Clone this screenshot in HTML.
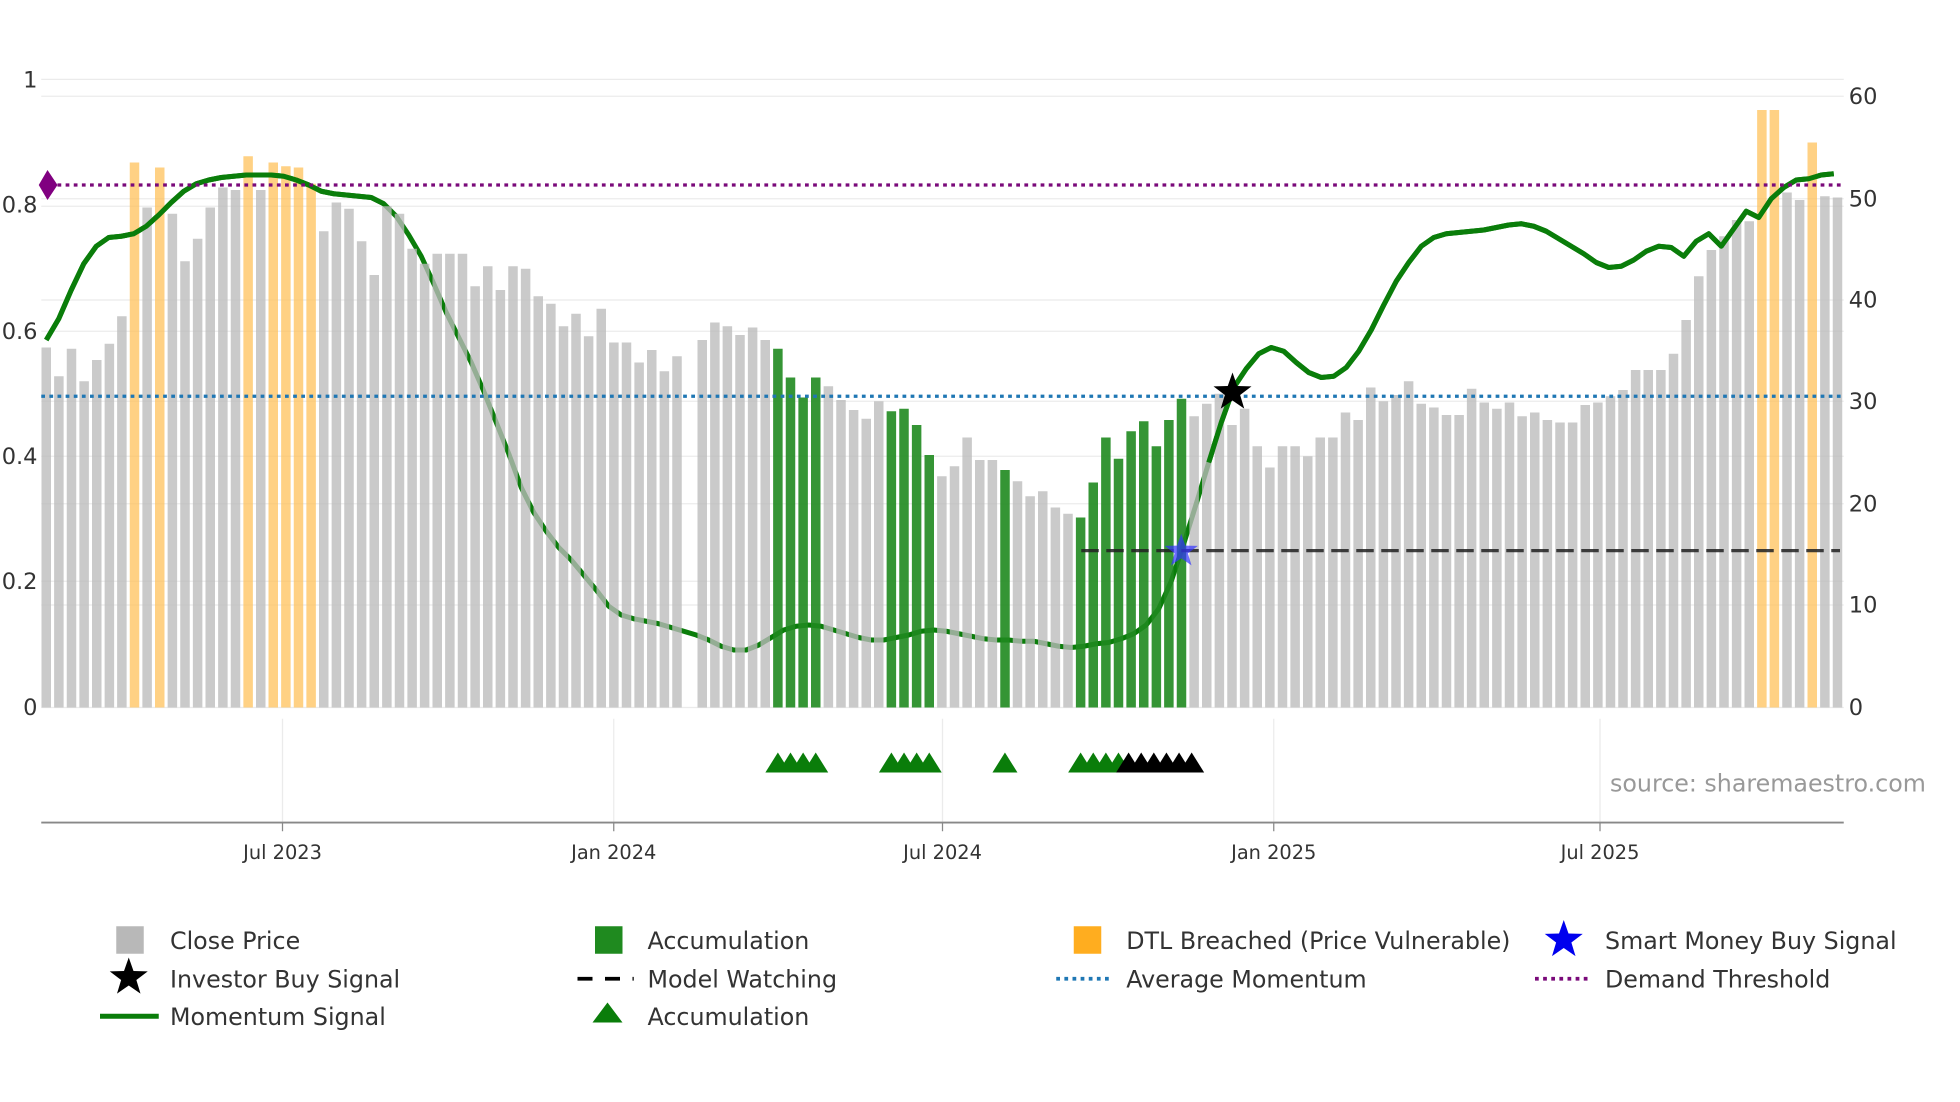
<!DOCTYPE html>
<html><head><meta charset="utf-8"><style>
html,body{margin:0;padding:0;background:#fff;}
svg{display:block;font-family:"DejaVu Sans","Liberation Sans",sans-serif;}
</style></head><body>
<svg id="s" width="1960" height="1102" viewBox="0 0 1568 881.6" preserveAspectRatio="none" xmlns="http://www.w3.org/2000/svg">
<rect width="1600" height="900" fill="#fff"/>
<g id="grid" stroke="#ebebeb" stroke-width="1"></g>
<g id="line1"></g>
<g id="bars"></g>
<g id="line2"></g>
<line x1="33" y1="148" x2="1475" y2="148" stroke="#7a0a7a" stroke-width="2.6" stroke-dasharray="3,3.5"/>
<line x1="33" y1="317" x2="1475" y2="317" stroke="#1f77b4" stroke-width="2.6" stroke-dasharray="3,3.5"/>
<line x1="865" y1="440.5" x2="1472" y2="440.5" stroke="#222" stroke-width="2.6" stroke-dasharray="14,6" opacity="0.85"/>
<polygon points="38,136 46,148 38,160 31,148" fill="#800080"/>
<g id="tri"></g>
<path id="bstar" fill="#3333ff" opacity="0.7"/>
<path id="kstar" fill="#000"/>
<line x1="33" y1="658" x2="1475" y2="658" stroke="#888" stroke-width="1.5"/>
<g id="xt" font-size="15.5" fill="#333" text-anchor="middle"></g>
<g font-size="18" fill="#333" text-anchor="end">
<text x="30" y="70">1</text><text x="30" y="170">0.8</text><text x="30" y="271">0.6</text><text x="30" y="371">0.4</text><text x="30" y="471">0.2</text><text x="30" y="572">0</text>
</g>
<g font-size="18" fill="#333">
<text x="1479" y="83">60</text><text x="1479" y="165">50</text><text x="1479" y="246">40</text><text x="1479" y="327">30</text><text x="1479" y="409">20</text><text x="1479" y="490">10</text><text x="1479" y="572">0</text>
</g>
<text x="1288" y="633" font-size="19" fill="#999">source: sharemaestro.com</text>
<g font-size="19" fill="#333">
<rect x="93" y="741" width="22" height="22" fill="#b8b8b8"/><text x="136" y="759">Close Price</text>
<rect x="476" y="741" width="22" height="22" fill="#1f8a1f"/><text x="518" y="759">Accumulation</text>
<rect x="859" y="741" width="22" height="22" fill="#ffad1f"/><text x="901" y="759">DTL Breached (Price Vulnerable)</text>
<path id="lb" fill="#0000ee"/><text x="1284" y="759">Smart Money Buy Signal</text>
<path id="lk" fill="#000"/><text x="136" y="790">Investor Buy Signal</text>
<line x1="462" y1="783" x2="507" y2="783" stroke="#000" stroke-width="3" stroke-dasharray="12,10"/><text x="518" y="790">Model Watching</text>
<line x1="845" y1="783" x2="890" y2="783" stroke="#1f77b4" stroke-width="3" stroke-dasharray="3,3.5"/><text x="901" y="790">Average Momentum</text>
<line x1="1228" y1="783" x2="1273" y2="783" stroke="#7a0a7a" stroke-width="3" stroke-dasharray="3,3.5"/><text x="1284" y="790">Demand Threshold</text>
<line x1="80" y1="813" x2="127" y2="813" stroke="#0a7d0a" stroke-width="4"/><text x="136" y="820">Momentum Signal</text>
<polygon points="486,802 498,818 474,818" fill="#0a7d0a"/><text x="518" y="820">Accumulation</text>
</g>
</svg>
<script>
var NS="http://www.w3.org/2000/svg";
function el(t,a,p){var e=document.createElementNS(NS,t);for(var k in a)e.setAttribute(k,a[k]);document.getElementById(p).appendChild(e);return e;}
function star(cx,cy,R){var r=R*0.4,d="";for(var i=0;i<10;i++){var a=-Math.PI/2+i*Math.PI/5,rr=i%2?r:R;d+=(i?"L":"M")+(cx+rr*Math.cos(a)).toFixed(1)+","+(cy+rr*Math.sin(a)).toFixed(1);}return d+"Z";}
[77,159,240,321,403,484,165,265,365,465,566,63.5].forEach(function(y){el("line",{x1:33,x2:1475,y1:y,y2:y},"grid");});
[226,491,754,1019,1280].forEach(function(x){el("line",{x1:x,x2:x,y1:575,y2:658},"grid");});
var xl=["Jul 2023","Jan 2024","Jul 2024","Jan 2025","Jul 2025"];
[226,491,754,1019,1280].forEach(function(x,i){el("line",{x1:x,x2:x,y1:658,y2:665,stroke:"#888","stroke-width":1},"xt");var t=el("text",{x:x,y:687},"xt");t.textContent=xl[i];});
var tops=[278,301,279,305,288,275,253,130,166,134,171,209,191,166,150,152,125,152,130,133,134,147,185,162,167,193,220,165,171,199,211,203,203,203,229,213,232,213,215,237,243,261,251,269,247,274,274,290,280,297,285,0,272,258,261,268,262,272,279,302,318,302,309,320,328,335,321,329,327,340,364,381,373,350,368,368,376,385,397,393,406,411,414,386,350,367,345,337,357,336,319,333,323,315,340,327,357,374,357,357,365,350,350,330,336,310,321,316,305,323,326,332,332,311,322,327,322,333,330,336,338,338,324,322,317,312,296,296,296,283,256,221,200,189,176,177,88,88,154,160,114,157,158];
var orange={7:1,9:1,16:1,18:1,19:1,20:1,21:1,136:1,137:1,140:1};
var green={};[58,59,60,61,67,68,69,70,76,82,83,84,85,86,87,88,89,90].forEach(function(i){green[i]=1;});
var N=tops.length,step=(1470-37)/(N-1);
for(var i=0;i<N;i++){if(!tops[i])continue;var x=37+i*step;
var c=orange[i]?"#ffbf55":green[i]?"#1f8a1f":"#bbbbbb",o=orange[i]?0.72:green[i]?0.9:0.78;
el("rect",{x:(x-3.8).toFixed(1),y:tops[i],width:7.6,height:566-tops[i],fill:c,opacity:o},"bars");}
var pts=[[37,272],[47,255],[57,232],[67,211],[77,197],[87,190],[97,189],[107,187],[117,181],[127,172],[137,162],[147,153],[157,147],[167,144],[177,142],[187,141],[197,140],[207,140],[217,140],[227,141],[237,144],[247,148],[257,153],[267,155],[277,156],[287,157],[297,158],[307,163],[317,173],[327,188],[337,205],[347,227],[357,250],[367,270],[377,290],[387,313],[397,338],[407,363],[417,390],[427,410],[437,425],[447,438],[457,448],[467,460],[477,472],[487,485],[497,492],[507,495],[517,497],[527,499],[537,502],[547,505],[557,508],[567,512],[577,517],[587,520],[597,520],[607,516],[617,510],[627,504],[637,501],[647,500],[657,501],[667,504],[677,507],[687,510],[697,512],[707,512],[717,510],[727,508],[737,505],[747,504],[757,505],[767,507],[777,509],[787,511],[797,512],[807,512],[817,513],[827,513],[837,515],[847,517],[857,518],[867,517],[877,515],[887,514],[897,511],[907,507],[917,500],[927,487],[937,465],[947,435],[957,403],[967,370],[977,338],[987,310],[997,295],[1007,283],[1017,278],[1027,281],[1037,290],[1047,298],[1057,302],[1067,301],[1077,294],[1087,281],[1097,264],[1107,244],[1117,225],[1127,210],[1137,197],[1147,190],[1157,187],[1167,186],[1177,185],[1187,184],[1197,182],[1207,180],[1217,179],[1227,181],[1237,185],[1247,191],[1257,197],[1267,203],[1277,210],[1287,214],[1297,213],[1307,208],[1317,201],[1327,197],[1337,198],[1347,205],[1357,193],[1367,187],[1377,197],[1387,183],[1397,169],[1407,174],[1417,159],[1427,150],[1437,144],[1447,143],[1457,140],[1467,139]];
function pathOf(a){return a.map(function(p,i){return (i?"L":"M")+p[0]+","+p[1];}).join("");}
el("path",{d:pathOf(pts),fill:"none",stroke:"#0a7d0a","stroke-width":4,"stroke-linejoin":"round"},"line1");
el("path",{d:pathOf(pts.filter(function(p){return p[0]<=307;})),fill:"none",stroke:"#0a7d0a","stroke-width":4,"stroke-linejoin":"round"},"line2");
el("path",{d:pathOf(pts.filter(function(p){return p[0]>=967;})),fill:"none",stroke:"#0a7d0a","stroke-width":4,"stroke-linejoin":"round"},"line2");
[58,59,60,61,67,68,69,70,76,82,83,84,85].forEach(function(i){var x=37+i*step;el("polygon",{points:(x)+",602 "+(x+10)+",618 "+(x-10)+",618",fill:"#0a7d0a"},"tri");});
[86,87,88,89,90,91].forEach(function(i){var x=37+i*step-2;el("polygon",{points:(x)+",602 "+(x+10)+",618 "+(x-10)+",618",fill:"#000"},"tri");});
document.getElementById("bstar").setAttribute("d",star(945,441,14));
document.getElementById("kstar").setAttribute("d",star(986,314,16));
document.getElementById("lb").setAttribute("d",star(1251,752,16));
document.getElementById("lk").setAttribute("d",star(103,782,16));
</script>
</body></html>
